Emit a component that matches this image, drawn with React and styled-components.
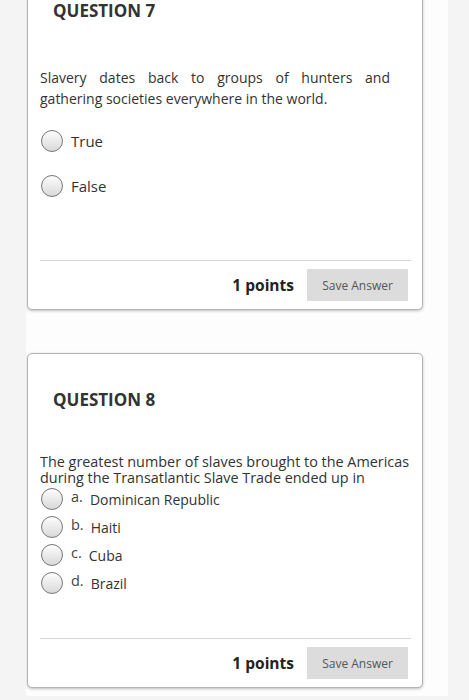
import React from "react";
import styled, { createGlobalStyle } from "styled-components";

const GlobalStyle = createGlobalStyle`
  body {
    margin: 0;
    background: #f4f4f4;
    font-family: "Open Sans", "Liberation Sans", sans-serif;
    color: #333;
  }
`;

const Column = styled.div`
  width: 422px;
  margin-left: 26px;
  background: #fdfdfd;
  padding-bottom: 8px;
  overflow: hidden;
`;

const Card = styled.div`
  width: 371px;
  margin-top: ${(p) => p.$top}px;
  margin-left: 1px;
  background: #fff;
  border: 1px solid #b4b4b4;
  border-radius: 5px;
  box-shadow: 0 1px 3px rgba(0, 0, 0, 0.25);
  padding: 36px 11px 8px 12px;
  box-sizing: content-box;
`;

const Heading = styled.h3`
  margin: 0 0 0 13px;
  font-size: 17px;
  line-height: 20px;
  font-weight: 700;
  color: #333;
`;

const QuestionText = styled.p`
  margin: ${(p) => p.$gap}px 0 0;
  width: ${(p) => p.$width}px;
  font-size: ${(p) => p.$size}px;
  line-height: ${(p) => p.$lh}px;
  text-align: ${(p) => (p.$justify ? "justify" : "left")};
  color: #333;
`;

const Options = styled.div`
  display: flex;
  flex-direction: column;
  gap: ${(p) => p.$gap}px;
  margin-top: ${(p) => p.$top}px;
`;

const Option = styled.label`
  display: flex;
  align-items: center;
  height: 22px;
  margin-left: 1px;
  font-size: ${(p) => p.$size}px;
  color: #333;
`;

const Radio = styled.span`
  flex: none;
  width: 20px;
  height: 20px;
  border-radius: 50%;
  border: 1px solid #777;
  background: linear-gradient(#fdfdfd, #d9d9d9);
  margin-right: 8px;
`;

const Letter = styled.span`
  font-size: 14.5px;
  line-height: 12px;
  color: #444;
  position: relative;
  top: -2px;
  margin-right: 7px;
`;

const Divider = styled.hr`
  margin: ${(p) => p.$top}px 0 0;
  border: none;
  border-top: 1px solid #d6d6d6;
`;

const Footer = styled.div`
  display: flex;
  justify-content: flex-end;
  align-items: center;
  padding: 8px 3px 0 0;
`;

const Points = styled.span`
  font-size: 15.5px;
  font-weight: 700;
  color: #222;
  margin-right: 13px;
`;

const SaveButton = styled.button`
  width: 101px;
  height: 32px;
  border: none;
  background: #dcdcdc;
  color: #555;
  font-family: "Open Sans", "Liberation Sans", sans-serif;
  font-size: 12px;
  padding: 0;
`;

const CardFooter = () => (
  <Footer>
    <Points>1 points</Points>
    <SaveButton>Save Answer</SaveButton>
  </Footer>
);

const choices = [
  ["a.", "Dominican Republic"],
  ["b.", "Haiti"],
  ["c.", "Cuba"],
  ["d.", "Brazil"],
];

export default function App() {
  return (
    <>
      <GlobalStyle />
      <Column>
        <Card $top={-36}>
          <Heading>QUESTION 7</Heading>
          <QuestionText $gap={46} $width={350} $size={14} $lh={21} $justify>
            Slavery dates back to groups of hunters and gathering societies
            everywhere in the world.
          </QuestionText>
          <Options $gap={23} $top={21}>
            <Option $size={15}>
              <Radio />
              True
            </Option>
            <Option $size={15}>
              <Radio />
              False
            </Option>
          </Options>
          <Divider $top={63} />
          <CardFooter />
        </Card>

        <Card $top={43}>
          <Heading>QUESTION 8</Heading>
          <QuestionText $gap={44} $width={373} $size={14.4} $lh={16}>
            The greatest number of slaves brought to the Americas during the
            Transatlantic Slave Trade ended up in
          </QuestionText>
          <Options $gap={6} $top={2}>
            {choices.map(([letter, text]) => (
              <Option key={letter} $size={14}>
                <Radio />
                <Letter>{letter}</Letter>
                {text}
              </Option>
            ))}
          </Options>
          <Divider $top={44} />
          <CardFooter />
        </Card>
      </Column>
    </>
  );
}
